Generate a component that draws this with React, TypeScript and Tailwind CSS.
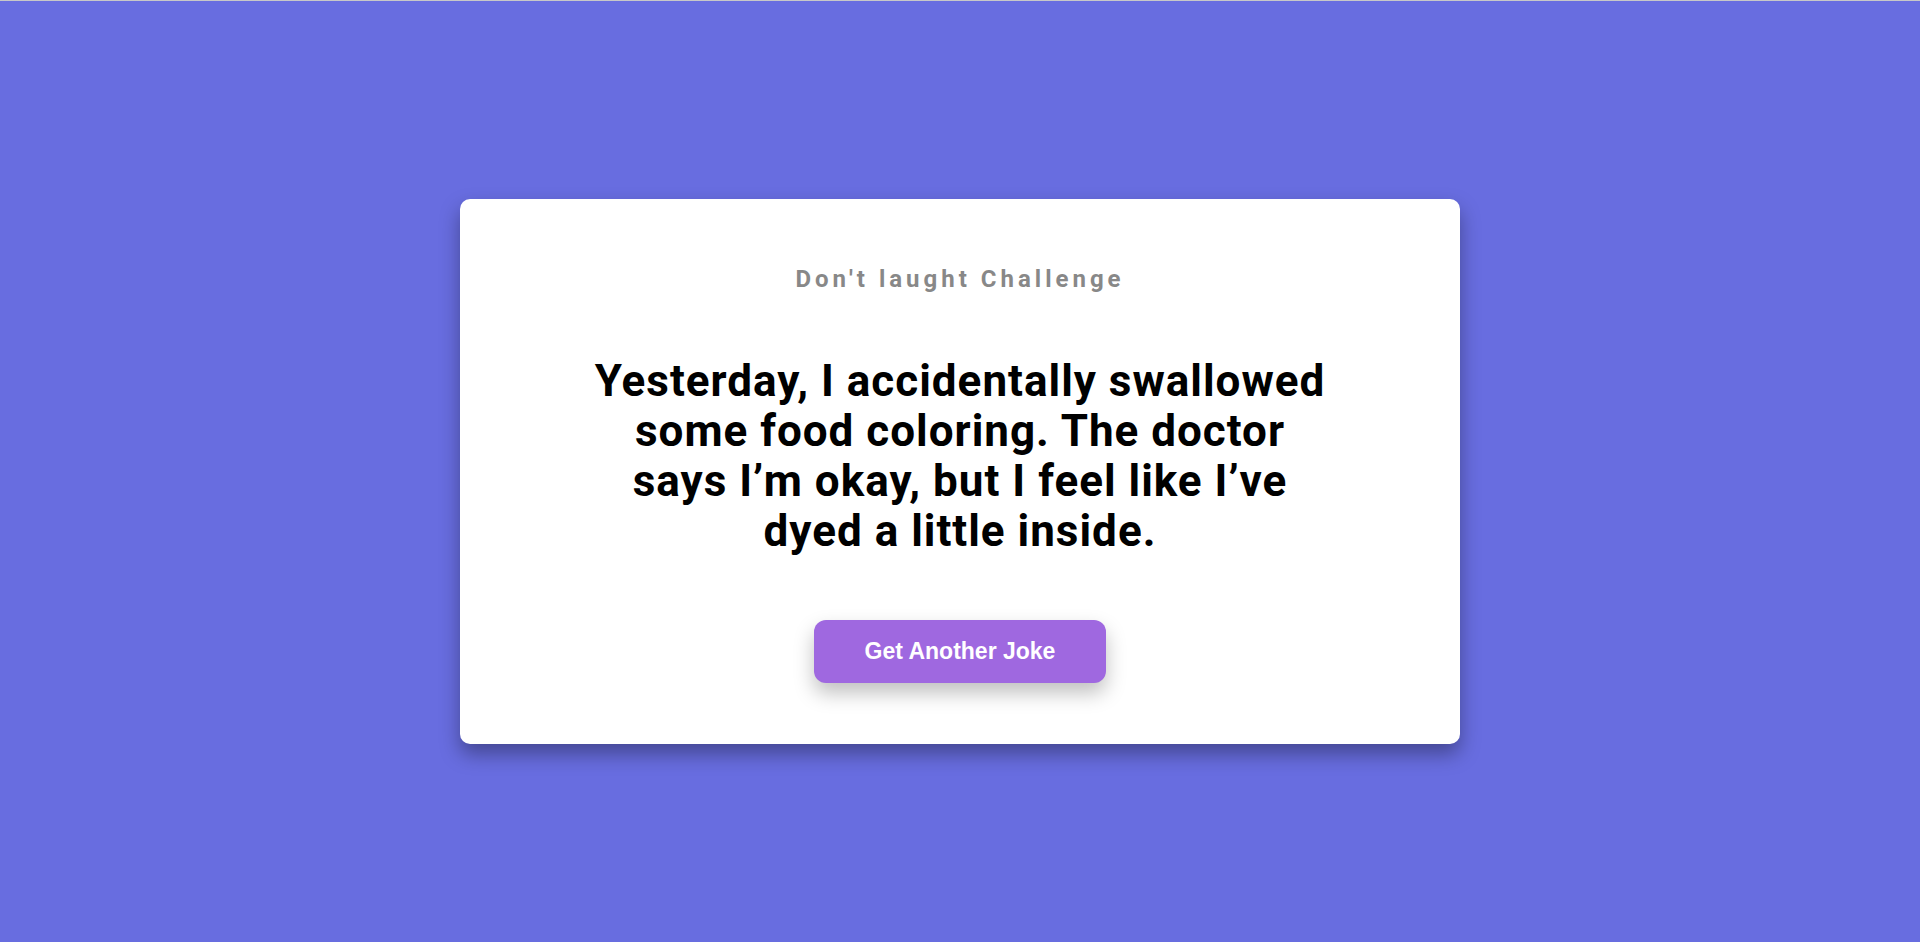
import React from "react";

export default function App() {
  return (
    <div className="w-full h-[942px] bg-[#686de0] flex flex-col">
      <div className="h-px bg-[#c8c8c8] shrink-0" />
      <div className="flex-1 flex items-center justify-center">
        <div className="w-[1000px] h-[545px] bg-white rounded-[10px] shadow-[0_10px_20px_rgba(0,0,0,0.35)] flex flex-col items-center pt-[66px]">
          <h3 className="text-[24px] leading-[28px] font-bold tracking-[4px] text-[#888888] font-['Roboto',sans-serif]">
            Don't laught Challenge
          </h3>
          <div className="mt-[63px] w-[740px] text-center text-[44px] leading-[50px] font-bold text-black tracking-[1px] font-['Roboto',sans-serif]">
            Yesterday, I accidentally swallowed some food coloring. The doctor says I’m okay, but I feel like I’ve dyed a little inside.
          </div>
          <button className="mt-[64px] w-[292px] h-[63px] rounded-[12px] bg-[#9f68e0] text-white text-[23px] font-bold font-['Liberation_Sans',Arial,sans-serif] shadow-[0_10px_20px_rgba(0,0,0,0.25)]">
            Get Another Joke
          </button>
        </div>
      </div>
    </div>
  );
}
